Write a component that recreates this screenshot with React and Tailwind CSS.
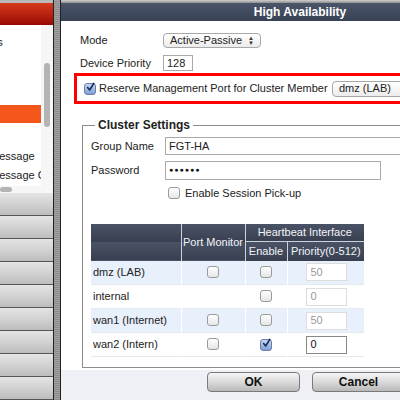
import { useState } from 'react';

const rows = [
    { name: 'dmz (LAB)', monitor: true, enable: false, priority: '50', shaded: true },
    { name: 'internal', monitor: false, enable: false, priority: '0', shaded: false },
    { name: 'wan1 (Internet)', monitor: true, enable: false, priority: '50', shaded: true },
    { name: 'wan2 (Intern)', monitor: true, enable: true, priority: '0', shaded: false },
];

function Check({ checked }) {
    if (checked) {
        return (
            <span className="inline-flex h-[12px] w-[12px] items-center justify-center rounded-[3px] border border-[#6d7fa8] bg-gradient-to-b from-[#c9d8f2] to-[#7f9fd8]">
                <svg width="11" height="11" viewBox="0 0 11 11" className="-mt-[3px] ml-[1px]">
                    <path d="M2 5.5 L4.5 8.5 L9.5 0.5" stroke="#1b2a55" strokeWidth="2" fill="none" strokeLinecap="round" strokeLinejoin="round" />
                </svg>
            </span>
        );
    }
    return <span className="inline-block h-[12px] w-[12px] rounded-[3px] border border-[#9a9a9a] bg-gradient-to-b from-white to-[#e6e6e6]" />;
}

export default function App() {
    const [mode] = useState('Active-Passive');

    return (
        <div className="flex h-[400px] w-[400px] overflow-hidden whitespace-nowrap bg-[#8a8a8a] text-[11px] text-[#222] font-['Liberation_Sans',Arial,sans-serif]">
            {/* left navigation panel */}
            <div className="flex w-[53px] shrink-0 flex-col bg-white">
                <div className="h-[3px] bg-[#b9b9b9]" />
                <div className="h-[24px] bg-gradient-to-b from-[#d8391f] to-[#9a0602]" />
                <div className="flex h-[171px]">
                    <div className="relative w-[41px] overflow-hidden">
                        <div className="absolute left-[-37px] top-[9px]">Settings</div>
                        <div className="absolute left-0 top-[80px] h-[18px] w-[41px] bg-[#f4561c]" />
                        <div className="absolute left-[-10px] top-[123px]">Message</div>
                        <div className="absolute left-[-10px] top-[142px]">Message C</div>
                    </div>
                    <div className="w-[12px] bg-[#f6f6f6] px-[3px] pt-[38px]">
                        <div className="h-[64px] rounded-full bg-[#b4b4b4]" />
                    </div>
                </div>
                <div className="flex h-[8px] items-center bg-[#f6f6f6]">
                    <div className="h-[5px] w-[12px] rounded-full bg-[#b4b4b4]" />
                </div>
                {[...Array(9)].map((_, i) => (
                    <div key={i} className="h-[23px] shrink-0 border-b border-[#555] bg-gradient-to-b from-[#e4e4e4] via-[#d2d2d2] to-[#bdbdbd]" />
                ))}
            </div>

            {/* splitter */}
            <div className="w-[8px] shrink-0 border-l border-r border-[#222] bg-[repeating-linear-gradient(0deg,#8c8c8c_0px,#8c8c8c_1px,#a0a0a0_1px,#a0a0a0_2px)]" />

            {/* dialog */}
            <div className="flex w-[478px] shrink-0 flex-col bg-white">
                <div className="h-[3px] bg-gradient-to-b from-[#d0d0d0] to-[#8e8e8e]" />
                <div className="flex h-[18px] items-center justify-center bg-gradient-to-b from-[#4a556a] to-[#394255] text-[12px] font-bold text-white">
                    High Availability
                </div>

                <div className="flex-1 overflow-hidden pl-[19px] pt-[12px]">
                    <div className="flex h-[15px] items-center">
                        <span className="w-[83px]">Mode</span>
                        <span className="flex h-[15px] w-[98px] items-center justify-between rounded-[4px] border border-[#a8a8a8] bg-gradient-to-b from-white to-[#ececec] pl-[6px] pr-[6px]">
                            {mode}
                            <span className="text-[6px] leading-[5px] text-[#333]">▲<br />▼</span>
                        </span>
                    </div>
                    <div className="mt-[7px] flex h-[16px] items-center">
                        <span className="w-[83px]">Device Priority</span>
                        <span className="flex h-[16px] w-[30px] items-center border border-[#aaa] pl-[3px]">128</span>
                    </div>

                    <div className="-ml-[6px] mt-[2px] flex h-[31px] items-center border-[3px] border-[#f00] pl-[7px]">
                        <Check checked />
                        <span className="ml-[3px] w-[233px]">Reserve Management Port for Cluster Member</span>
                        <span className="flex h-[16px] w-[120px] items-center rounded-[4px] border border-[#a8a8a8] bg-gradient-to-b from-white to-[#ececec] pl-[6px]">dmz (LAB)</span>
                    </div>

                    {/* Cluster Settings group */}
                    <div className="ml-[2px] mt-[21px] h-[243px] border-b border-l border-t border-[#8c8c8c] pl-[8px]">
                        <div className="-mt-[8px] ml-[4px] w-fit bg-white px-[3px] text-[12px] font-bold leading-[14px]">Cluster Settings</div>
                        <div className="mt-[5px] flex h-[18px] items-center">
                            <span className="w-[74px]">Group Name</span>
                            <span className="flex h-[18px] flex-1 items-center border border-[#aaa] pl-[3px]">FGT-HA</span>
                        </div>
                        <div className="mt-[6px] flex h-[19px] items-center">
                            <span className="w-[74px]">Password</span>
                            <span className="flex h-[19px] w-[216px] items-center border border-[#aaa] pl-[3px] text-[7px] tracking-[1px] text-[#111]">●●●●●●</span>
                        </div>
                        <div className="mt-[5px] flex items-center pl-[77px]">
                            <Check />
                            <span className="ml-[5px]">Enable Session Pick-up</span>
                        </div>

                        <table className="mt-[22px] w-[273px] border-collapse">
                            <thead>
                                <tr className="h-[18px] bg-gradient-to-b from-[#4a5366] to-[#383f50] text-[#f2f4f8]">
                                    <th rowSpan={2} className="w-[90px] border-r border-[#cdd2dc] font-normal" />
                                    <th rowSpan={2} className="w-[64px] border-r border-[#cdd2dc] font-normal">Port Monitor</th>
                                    <th colSpan={2} className="border-b border-[#cdd2dc] font-normal">Heartbeat Interface</th>
                                </tr>
                                <tr className="h-[19px] bg-gradient-to-b from-[#4a5366] to-[#383f50] text-[#f2f4f8]">
                                    <th className="w-[42px] border-r border-[#cdd2dc] font-normal">Enable</th>
                                    <th className="font-normal">Priority(0-512)</th>
                                </tr>
                            </thead>
                            <tbody>
                                {rows.map((r) => (
                                    <tr key={r.name} className={`h-[24px] border-b border-[#e6e9ee] ${r.shaded ? 'bg-[#e8f0fc]' : 'bg-white'}`}>
                                        <td className="border-r border-white pl-[2px]">{r.name}</td>
                                        <td className="border-r border-white text-center">
                                            {r.monitor && <span className="inline-flex pt-[3px]"><Check /></span>}
                                        </td>
                                        <td className="border-r border-white text-center">
                                            <span className="inline-flex pt-[3px]"><Check checked={r.enable} /></span>
                                        </td>
                                        <td className="pl-[18px]">
                                            <span className={`flex h-[18px] w-[41px] items-center bg-white pl-[4px] ${r.enable ? 'border border-[#888] text-[#111]' : 'border border-[#ddd] text-[#999]'}`}>
                                                {r.priority}
                                            </span>
                                        </td>
                                    </tr>
                                ))}
                            </tbody>
                        </table>
                    </div>
                </div>

                <div className="flex h-[30px] shrink-0 gap-[12px] bg-[#eef0f5] pl-[146px] pt-[2px]">
                    <button className="h-[20px] w-[93px] rounded-[4px] border border-[#7a7a7a] bg-gradient-to-b from-[#f6f6f6] via-[#dadada] to-[#b9b9b9] text-[12px] font-bold text-[#111]">OK</button>
                    <button className="h-[20px] w-[93px] rounded-[4px] border border-[#7a7a7a] bg-gradient-to-b from-[#f6f6f6] via-[#dadada] to-[#b9b9b9] text-[12px] font-bold text-[#111]">Cancel</button>
                </div>
            </div>
        </div>
    );
}
